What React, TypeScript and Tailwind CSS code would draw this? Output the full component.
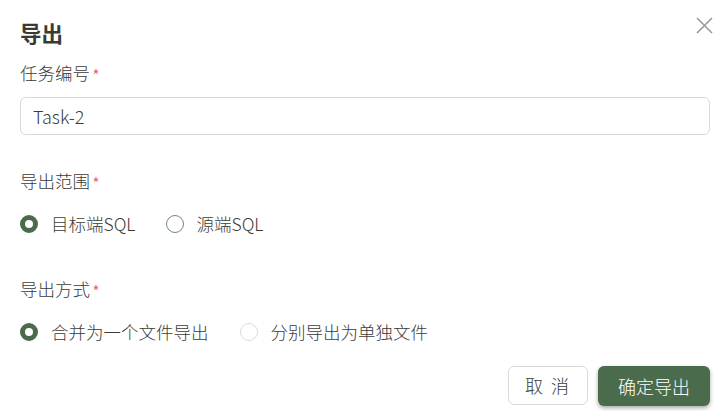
import type { ReactNode } from "react";

const font = {
  fontFamily: '"Noto Sans CJK SC", "Noto Sans", sans-serif',
};

function Label({ children }: { children: ReactNode }) {
  return (
    <div className="flex items-center text-[17.5px] font-light leading-[24px] text-[#3b3b36]">
      <span>{children}</span>
      <span className="ml-[2px] mt-[4px] text-[18px] leading-[18px] text-[#f5484d]">*</span>
    </div>
  );
}

function Radio({
  checked,
  muted,
  children,
}: {
  checked?: boolean;
  muted?: boolean;
  children: ReactNode;
}) {
  const ring = checked
    ? "border-[5px] border-[#4a6b4c]"
    : muted
      ? "border border-[#dcdcdc]"
      : "border border-[#6f8f72]";
  return (
    <label className="flex items-center gap-[13px] text-[17.5px] font-light leading-[24px] text-[#3b3b36]">
      <span className={`box-border block h-[18px] w-[18px] rounded-full bg-white ${ring}`} />
      <span>{children}</span>
    </label>
  );
}

export default function App() {
  return (
    <div style={font} className="relative h-[411px] w-[724px] overflow-hidden bg-white">
      <button className="absolute right-[11px] top-[17px] text-[#9a9a9a]" aria-label="close">
        <svg width="17" height="17" viewBox="0 0 17 17" fill="none" stroke="currentColor" strokeWidth="1.6">
          <path d="M1 1 L16 16 M16 1 L1 16" />
        </svg>
      </button>

      <div className="flex flex-col pl-[20px] pr-[14px] pt-[19px]">
        <h2 className="text-[21.5px] font-bold leading-[28px] text-[#3a3a35]">导出</h2>

        <div className="mt-[14px]">
          <Label>任务编号</Label>
        </div>
        <div className="mt-[12px] flex h-[38px] items-center rounded-[6px] border border-[#d9d9d9] px-[12px] text-[18px] font-light text-[#3b3b36]">
          Task-2
        </div>

        <div className="mt-[34px]">
          <Label>导出范围</Label>
        </div>
        <div className="mt-[19px] flex items-center gap-[30px]">
          <Radio checked>目标端SQL</Radio>
          <Radio>源端SQL</Radio>
        </div>

        <div className="mt-[41px]">
          <Label>导出方式</Label>
        </div>
        <div className="mt-[19px] flex items-center gap-[31px]">
          <Radio checked>合并为一个文件导出</Radio>
          <Radio muted>分别导出为单独文件</Radio>
        </div>

        <div className="mt-[22px] flex justify-end gap-[10px]">
          <button className="h-[39px] w-[80px] rounded-[6px] border border-[#d9d9d9] bg-white text-[18px] font-light tracking-[2px] text-[#3b3b36]">
            取 消
          </button>
          <button className="h-[40px] w-[112px] rounded-[6px] bg-[#4a6b4c] text-[18px] font-light text-white shadow-[0_2px_4px_rgba(0,0,0,0.35)]">
            确定导出
          </button>
        </div>
      </div>
    </div>
  );
}
